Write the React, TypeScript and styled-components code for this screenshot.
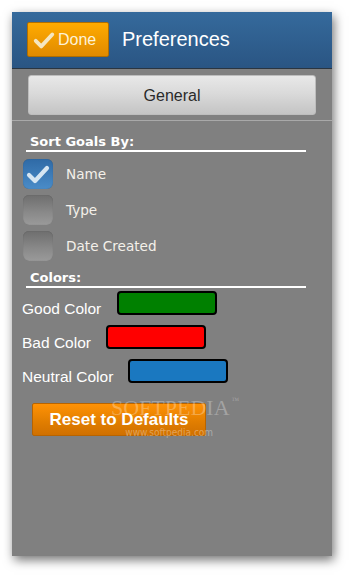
import React from "react";
import styled, { createGlobalStyle } from "styled-components";

const Global = createGlobalStyle`
  html, body { margin: 0; padding: 0; background: #ffffff; }
  body { width: 352px; height: 576px; overflow: hidden; font-family: "Liberation Sans", Arial, sans-serif; }
`;

const Page = styled.div`
  padding: 12px 20px 20px 12px;
`;

const Window = styled.div`
  position: relative;
  width: 320px;
  height: 544px;
  background: #808080;
  box-shadow: 2px 4px 10px rgba(0, 0, 0, 0.55);
  display: flex;
  flex-direction: column;
`;

const Header = styled.div`
  height: 56px;
  border-bottom: 1px solid #2b3540;
  background: linear-gradient(#356a9c, #2a5583);
  display: flex;
  align-items: center;
  padding: 0 0 0 15px;
  gap: 13px;
`;

const DoneButton = styled.div`
  width: 82px;
  height: 35px;
  box-sizing: border-box;
  border: 1px solid #b06e00;
  border-radius: 2px;
  background: linear-gradient(#ffab00, #e08a00);
  display: flex;
  align-items: center;
  gap: 3px;
  padding-left: 5px;
  color: #fdf2d8;
  font-size: 16px;
  margin-top: -1px;
`;

const Title = styled.div`
  color: #ffffff;
  font-size: 20px;
  margin-top: -2px;
`;

const TabBar = styled.div`
  padding: 6px 16px 5px 16px;
  border-bottom: 1px solid #a9a9a9;
`;

const TabButton = styled.div`
  height: 40px;
  box-sizing: border-box;
  border: 1px solid #bdbdbd;
  border-radius: 3px;
  background: linear-gradient(#e8e8e8, #dadada 45%, #c4c4c4);
  display: flex;
  align-items: center;
  justify-content: center;
  color: #2a2a2a;
  font-size: 16px;
  padding-top: 1px;
`;

const Body = styled.div`
  padding: 13px 0 0 0;
  display: flex;
  flex-direction: column;
`;

const SectionTitle = styled.div<{ $top?: number }>`
  margin: ${(p) => p.$top ?? 0}px 26px 0 14px;
  padding: 0 0 1px 4px;
  border-bottom: 2px solid #ffffff;
  color: #ffffff;
  font-family: "DejaVu Sans", Verdana, sans-serif;
  font-weight: bold;
  font-size: 13px;
  line-height: 15px;
`;

const CheckList = styled.div`
  display: flex;
  flex-direction: column;
  gap: 6px;
  margin: 7px 0 0 11px;
`;

const CheckRow = styled.div`
  display: flex;
  align-items: center;
  gap: 13px;
`;

const Box = styled.div<{ $on?: boolean }>`
  width: 30px;
  height: 30px;
  border-radius: 6px;
  display: flex;
  align-items: center;
  justify-content: center;
  background: ${(p) =>
    p.$on
      ? "linear-gradient(#2f6aa6, #4a8cc8)"
      : "linear-gradient(#6e6e6e, #8a8a8a 60%, #9a9a9a)"};
  box-shadow: inset 0 0 1px rgba(0,0,0,0.3);
`;

const CheckLabel = styled.div`
  color: #f4f0ea;
  font-family: "DejaVu Sans", Verdana, sans-serif;
  font-size: 13.6px;
`;

const ColorList = styled.div`
  display: flex;
  flex-direction: column;
  gap: 8px;
  margin: 3px 0 0 10px;
`;

const ColorRow = styled.div`
  display: flex;
  align-items: flex-start;
`;

const ColorLabel = styled.div`
  color: #ffffff;
  font-size: 15.5px;
  line-height: 17px;
  padding-top: 9px;
`;

const Swatch = styled.div<{ $c: string; $gap: number }>`
  margin-left: ${(p) => p.$gap}px;
  width: 100px;
  height: 24px;
  box-sizing: border-box;
  border: 2px solid #000;
  border-radius: 4px;
  background: ${(p) => p.$c};
`;

const ResetButton = styled.div`
  margin: 18px 0 0 20px;
  width: 174px;
  height: 33px;
  box-sizing: border-box;
  border: 1px solid #b86400;
  border-radius: 2px;
  background: linear-gradient(#ff9205, #e07d00 60%, #d07000);
  color: #ffffff;
  font-weight: bold;
  font-size: 17px;
  display: flex;
  align-items: center;
  justify-content: center;
  padding-top: 1px;
`;

const Watermark = styled.div`
  position: absolute;
  left: 99px;
  top: 385px;
  pointer-events: none;
  display: flex;
  flex-direction: column;
  align-items: center;
  color: rgba(255, 255, 255, 0.28);
  font-family: "Liberation Serif", serif;
`;

const WmBig = styled.div`
  font-size: 22px;
  line-height: 22px;
  display: flex;
  align-items: flex-start;
`;

const Tm = styled.span`
  font-size: 8px;
  line-height: 8px;
  margin-left: 2px;
`;

const WmSmall = styled.div`
  font-family: "DejaVu Sans Condensed", "DejaVu Sans", sans-serif;
  font-size: 10px;
  line-height: 12px;
  margin-top: 8px;
  margin-right: 12px;
  color: rgba(255,255,255,0.35);
`;

const Check = ({ color, size }: { color: string; size: number }) => (
  <svg width={size} height={size} viewBox="0 0 24 24">
    <path d="M3 13 L9 19 L21 6" fill="none" stroke={color} strokeWidth={4.2} strokeLinecap="round" strokeLinejoin="round" />
  </svg>
);

export default function App() {
  return (
    <>
      <Global />
      <Page>
        <Window>
          <Header>
            <DoneButton>
              <Check color="#f5e6c0" size={22} />
              Done
            </DoneButton>
            <Title>Preferences</Title>
          </Header>
          <TabBar>
            <TabButton>General</TabButton>
          </TabBar>
          <Body>
            <SectionTitle>Sort Goals By:</SectionTitle>
            <CheckList>
              <CheckRow>
                <Box $on>
                  <Check color="#d6e6f2" size={24} />
                </Box>
                <CheckLabel>Name</CheckLabel>
              </CheckRow>
              <CheckRow>
                <Box />
                <CheckLabel>Type</CheckLabel>
              </CheckRow>
              <CheckRow>
                <Box />
                <CheckLabel>Date Created</CheckLabel>
              </CheckRow>
            </CheckList>
            <SectionTitle $top={9}>Colors:</SectionTitle>
            <ColorList>
              <ColorRow>
                <ColorLabel>Good Color</ColorLabel>
                <Swatch $c="#008000" $gap={16} />
              </ColorRow>
              <ColorRow>
                <ColorLabel>Bad Color</ColorLabel>
                <Swatch $c="#ff0000" $gap={15} />
              </ColorRow>
              <ColorRow>
                <ColorLabel>Neutral Color</ColorLabel>
                <Swatch $c="#1a78c0" $gap={15} />
              </ColorRow>
            </ColorList>
            <ResetButton>Reset to Defaults</ResetButton>
          </Body>
          <Watermark>
            <WmBig>
              SOFTPEDIA<Tm>™</Tm>
            </WmBig>
            <WmSmall>www.softpedia.com</WmSmall>
          </Watermark>
        </Window>
      </Page>
    </>
  );
}
